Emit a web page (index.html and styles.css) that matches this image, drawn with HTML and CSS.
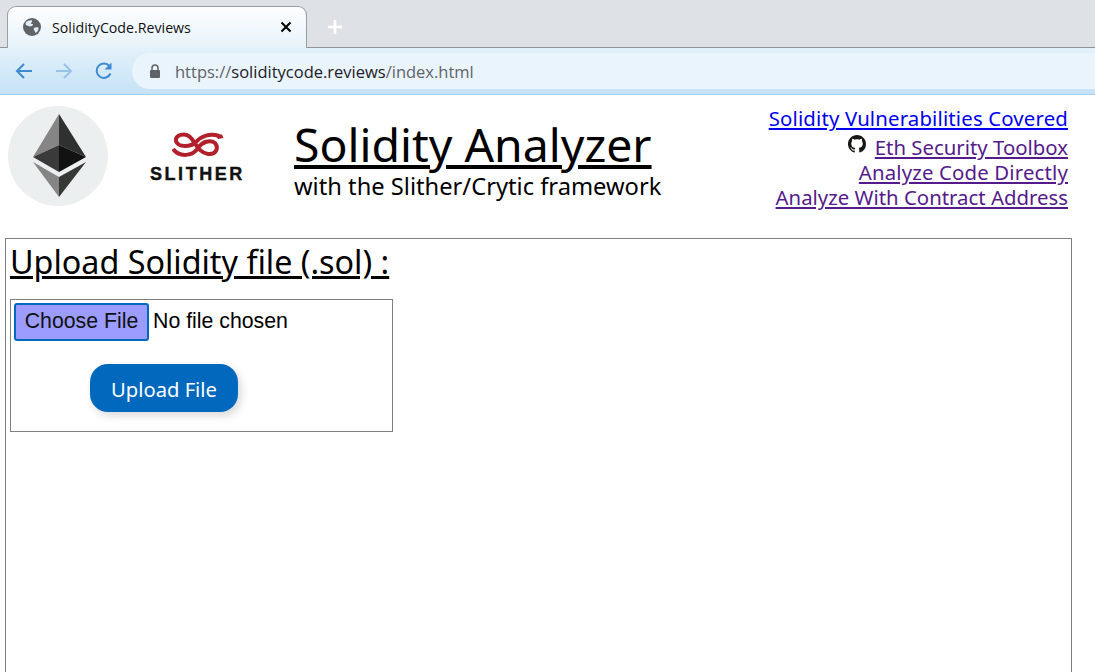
FILE: index.html
```html
<!DOCTYPE html>
<html lang="en">
<head>
<meta charset="utf-8">
<title>SolidityCode.Reviews</title>
<link rel="stylesheet" href="styles.css">
</head>
<body>
<div class="browser">
  <div class="tabstrip">
    <div class="tab">
      <svg class="globe" viewBox="0 0 18 18" width="18" height="18"><circle cx="9" cy="9" r="9" fill="#5f6368"/><path d="M3 4c2-1 4-2 6-1.500 1 1-1 2-1 3s2 0 2 1-2 2-3 2-2-1-3-1-2-1-1-3.500zM11 10c1-1 3-1 4.500-.5.300 2-1 4.500-3 5.500-.5-1-.5-2-1.500-3-.5-.7-.5-1.500 0-2z" fill="#e4eef6"/></svg>
      <span class="tab-title">SolidityCode.Reviews</span>
      <svg class="tab-close" viewBox="0 0 12 12" width="12" height="12"><path d="M1.500 1.500l9 9M10.500 1.500l-9 9" stroke="#000" stroke-width="2" fill="none"/></svg>
    </div>
    <svg class="newtab" viewBox="0 0 16 16" width="16" height="16"><path d="M8 1v14M1 8h14" stroke="#fff" stroke-width="2.600" fill="none"/></svg>
  </div>
  <div class="toolbar">
    <svg class="nav" viewBox="0 0 20 20" width="20" height="20"><path d="M18 10H3M10 3l-7 7 7 7" stroke="#3d8ad0" stroke-width="2" fill="none"/></svg>
    <svg class="nav" viewBox="0 0 20 20" width="20" height="20"><path d="M2 10h15M10 3l7 7-7 7" stroke="#97c3ea" stroke-width="2" fill="none"/></svg>
    <svg class="nav" viewBox="0 0 20 20" width="20" height="20"><path d="M16.500 12.500A7.200 7.200 0 1 1 15.500 5.200" stroke="#3d8ad0" stroke-width="2" fill="none"/><path d="M17.500 1.500v7h-7z" fill="#3d8ad0"/></svg>
    <div class="omnibox">
      <svg class="lock" viewBox="0 0 12 14" width="12" height="14"><path d="M3 6V4a3 3 0 0 1 6 0v2" stroke="#5f6368" stroke-width="1.500" fill="none"/><rect x="1" y="6" width="10" height="8" rx="1" fill="#5f6368"/></svg>
      <span class="url"><span class="url-dim">https://</span><span class="url-host">soliditycode.reviews</span><span class="url-dim">/index.html</span></span>
    </div>
  </div>
</div>
<header class="site-header">
  <svg class="eth" viewBox="0 0 100 100" width="100" height="100">
    <circle cx="50" cy="50" r="50" fill="#ecefef"/>
    <path d="M51 8 25 51 51 39z" fill="#858585"/>
    <path d="M51 8 78 51 51 39z" fill="#2f3130"/>
    <path d="M51 39 25 51 51 66z" fill="#3a3a3a"/>
    <path d="M51 39 78 51 51 66z" fill="#121212"/>
    <path d="M25 56 51 91V71z" fill="#858585"/>
    <path d="M78 56 51 91V71z" fill="#363836"/>
  </svg>
  <div class="slither">
    <svg class="snake" viewBox="0 0 52 28" width="52" height="28">
      <path d="M47 5C38 2 29 5 24 11 19 16 6 17 4 10 3 4 13 1 18 6 23 10 25 21 36 23 44 24 47 17 43 12 38 8 30 11 26 17 21 25 8 27 1 18" fill="none" stroke="#b2202c" stroke-width="4"/>
      <path d="M43 3 50 3.500 51.500 7 46 8z" fill="#b2202c"/>
    </svg>
    <span class="slither-name">SLITHER</span>
  </div>
  <div class="titles">
    <h1 class="title">Solidity Analyzer</h1>
    <div class="subtitle">with the Slither/Crytic framework</div>
  </div>
  <nav class="links">
    <a class="link link-new link-wide" href="#a">Solidity Vulnerabilities Covered</a>
    <div class="link-gh">
      <svg class="octo" viewBox="0 0 16 16" width="18" height="18"><path fill="#161614" d="M8 0C3.580 0 0 3.580 0 8c0 3.540 2.290 6.530 5.470 7.590.4.070.55-.17.550-.38 0-.19-.01-.82-.01-1.490-2.010.37-2.530-.49-2.690-.94-.09-.23-.48-.94-.82-1.130-.28-.15-.68-.52-.01-.53.630-.01 1.080.58 1.230.82.720 1.210 1.870.87 2.330.66.070-.52.280-.87.510-1.070-1.780-.2-3.640-.89-3.640-3.950 0-.87.310-1.590.820-2.150-.08-.2-.36-1.020.08-2.120 0 0 .67-.21 2.200.82.640-.18 1.320-.27 2-.27s1.360.09 2 .27c1.530-1.040 2.200-.82 2.200-.82.440 1.100.16 1.920.08 2.120.51.560.82 1.270.82 2.150 0 3.070-1.870 3.750-3.650 3.950.29.250.54.730.54 1.480 0 1.070-.01 1.930-.01 2.200 0 .21.150.46.550.38A8.010 8.010 0 0 0 16 8c0-4.420-3.580-8-8-8z"/></svg>
      <a class="link" href="#b">Eth Security Toolbox</a>
    </div>
    <a class="link link-wide" href="#c">Analyze Code Directly</a>
    <a class="link" href="#d">Analyze With Contract Address</a>
  </nav>
</header>
<main class="panel">
  <h2 class="panel-title">Upload Solidity file (.sol) :</h2>
  <form class="upload">
    <input class="file" type="file">
    <div class="upload-row"><button class="upload-btn" type="button">Upload File</button></div>
  </form>
</main>
</body>
</html>
```
FILE: styles.css
```css
html, body { margin: 0; height: 672px; overflow: hidden; background: #fff; }
body { font-family: "Noto Sans", sans-serif; color: #000; }
.browser { height: 95px; font-family: "Open Sans", sans-serif; }
.tabstrip { height: 48px; background: #dee1e6; display: flex; align-items: flex-end; padding-left: 7px; box-sizing: border-box; border-bottom: 1px solid #8f949a; }
.tab { width: 300px; height: 42px; margin-bottom: -1px; box-sizing: border-box; border: 1px solid #9a9ea3; border-bottom: 0; border-radius: 9px 9px 0 0; background: linear-gradient(#fdfeff, #e6f2fa); display: flex; align-items: center; padding: 0 14px 1px 15px; }
.tab-title { font-size: 14.200px; margin-left: 11px; flex: 1; color: #111; }
.newtab { margin: 0 0 12px 20px; }
.toolbar { height: 47px; box-sizing: border-box; overflow: hidden; background: linear-gradient(#e3f1fa, #c6e2f5); border-bottom: 1px solid #a3cff0; display: flex; align-items: center; padding-left: 14px; gap: 20px; }
.omnibox { flex: 1; height: 36px; margin-right: -30px; margin-left: -2px; border-radius: 18px; background: #eaf4fc; display: flex; align-items: center; padding-left: 17px; box-sizing: border-box; }
.url { font-size: 16.500px; margin-left: 14px; }
.url-dim { color: #5f6368; }
.url-host { color: #202124; }
.site-header { display: flex; height: 143px; box-sizing: border-box; padding: 11px 27px 0 8px; }
.eth { flex: none; }
.slither { flex: none; width: 93px; margin: 25px 51px 0 42px; display: flex; flex-direction: column; align-items: flex-start; }
.snake { display: block; margin-left: 22px; }
.slither-name { font-family: "Liberation Sans", sans-serif; font-weight: 700; font-size: 18px; line-height: 18px; letter-spacing: 2.550px; color: #111; margin-top: 6px; white-space: nowrap; -webkit-text-stroke: 0.4px #111; }
.titles { flex: 1; padding-top: 14px; }
.title { margin: 0; font-weight: 400; font-size: 46.400px; line-height: 48px; text-decoration: underline; }
.subtitle { font-size: 23.700px; line-height: 32px; margin-top: 2px; }
.links { display: flex; flex-direction: column; align-items: flex-end; font-size: 20.370px; line-height: 25px; }
.link { color: #551a8b; }
.link-new { color: #0000ee; margin-bottom: 4px; }
.link-wide { letter-spacing: 0.160px; }
.link-gh { display: flex; align-items: flex-start; gap: 9px; }
.panel { width: 1067px; height: 434px; box-sizing: border-box; margin-left: 5px; border: 1px solid #808080; border-bottom: 0; padding: 0 4px; }
.panel-title { margin: 0; font-weight: 400; font-size: 32.300px; line-height: 44px; text-decoration: underline; }
.upload { width: 383px; height: 133px; margin-top: 16px; box-sizing: border-box; border: 1px solid #808080; padding: 3px; }
.file { font-family: "Liberation Sans", sans-serif; font-size: 21.300px; display: block; width: 370px; }
.file::file-selector-button { font: inherit; height: 38px; width: 135px; padding: 0 0 2px; margin-right: 4px; background: #9c9cff; color: #111; border: 2px solid #0069bd; border-radius: 3px; }
.upload-row { display: flex; margin-top: 23px; padding-left: 76px; }
.upload-btn { width: 148px; height: 48px; border: 0; border-radius: 18px; background: #0069bd; color: #fff; font-family: "Noto Sans", sans-serif; font-size: 20.200px; box-shadow: 3px 4px 8px rgba(0, 0, 0, 0.15); padding: 2px 0 0; }
```
